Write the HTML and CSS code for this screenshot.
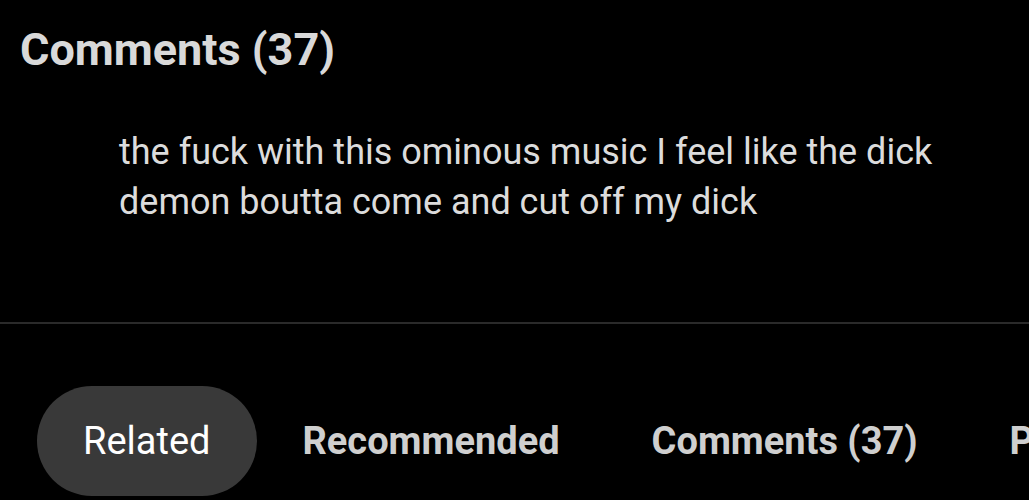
FILE: index.html
```html
<!DOCTYPE html>
<html lang="en">
<head>
    <meta charset="UTF-8">
    <meta name="viewport" content="width=device-width, initial-scale=1.0">
    <title>Comments</title>
    <link rel="stylesheet" href="styles.css">
</head>
<body>
<section class="comments">
    <h2 class="comments-title">Comments (37)</h2>
    <div class="comment">
        <p class="comment-text">the fuck with this ominous music I feel like the dick demon boutta come and cut off my dick</p>
    </div>
</section>

<nav class="tabs">
    <button class="tab active">Related</button>
    <button class="tab">Recommended</button>
    <button class="tab">Comments (37)</button>
    <button class="tab">Playlists</button>
</nav>
</body>
</html>
```

FILE: styles.css
```css
body {
    font-family: Roboto, "Noto Sans", sans-serif;
    margin: 0;
    background-color: #000;
    color: #dedede;
    overflow: hidden;
    width: 1029px;
    height: 500px;
}

.comments {
    border-bottom: 2px solid #2a2a2a;
    height: 324px;
    box-sizing: border-box;
}

.comments-title {
    margin: 0;
    padding: 23px 0 0 20px;
    font-size: 45px;
    font-weight: bold;
    line-height: 54px;
    color: #d9d9d9;
}

.comment {
    padding: 50px 60px 0 119px;
}

.comment-text {
    margin: 0;
    font-size: 36px;
    line-height: 50px;
    color: #dcdcdc;
}

.tabs {
    display: flex;
    padding: 62px 0 0 37px;
    white-space: nowrap;
}

.tab {
    flex-shrink: 0;
    background: none;
    border: none;
    font-family: inherit;
    font-size: 38px;
    font-weight: bold;
    color: #cfcfcf;
    padding: 0 46px;
    height: 110px;
    border-radius: 55px;
}

.tab.active {
    background-color: #393939;
    color: #fff;
    font-weight: normal;
}
```
